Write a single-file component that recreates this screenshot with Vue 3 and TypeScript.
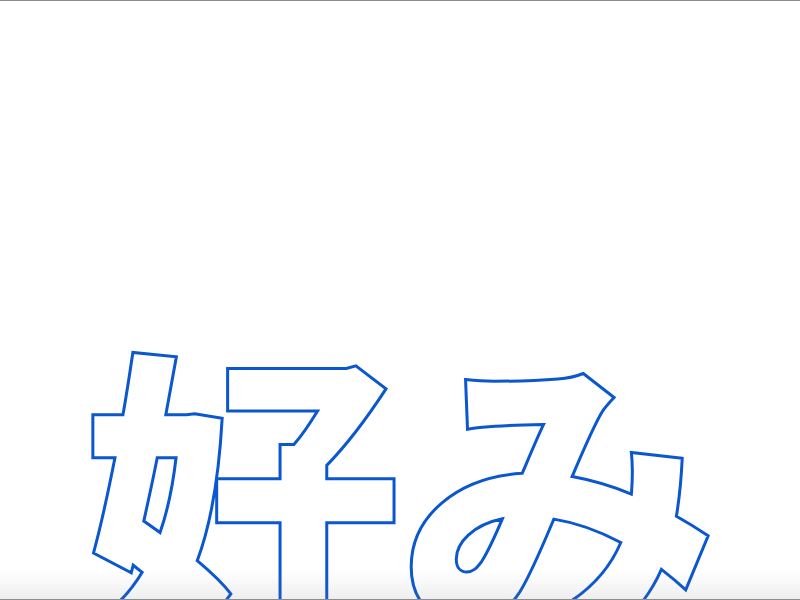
<script setup lang="ts">
const word = '好み'
</script>

<template>
  <main class="page">
    <div class="hero">
      <h1 class="word">{{ word }}</h1>
    </div>
    <div class="bottom-fade"></div>
  </main>
</template>

<style scoped>
.page {
  height: 600px;
  overflow: hidden;
  background: #fff;
  border-top: 1px solid #8c8c8c;
  box-sizing: border-box;
  position: relative;
}

.hero {
  padding-top: 294px;
  padding-left: 82px;
}

.word {
  margin: 0;
  font-family: "Noto Sans CJK JP", sans-serif;
  font-size: 320px;
  font-weight: 900;
  line-height: 1.2;
  letter-spacing: -3px;
  white-space: nowrap;
  color: #fff;
  -webkit-text-stroke: 3px #0a57d0;
}

.bottom-fade {
  position: absolute;
  left: 0;
  right: 0;
  bottom: 0;
  height: 30px;
  background: linear-gradient(rgba(120, 120, 120, 0), rgba(120, 120, 120, 0.12));
  border-bottom: 1px solid #8c8c8c;
  box-sizing: border-box;
}
</style>

<style>
html, body {
  margin: 0;
  overflow: hidden;
}
</style>
